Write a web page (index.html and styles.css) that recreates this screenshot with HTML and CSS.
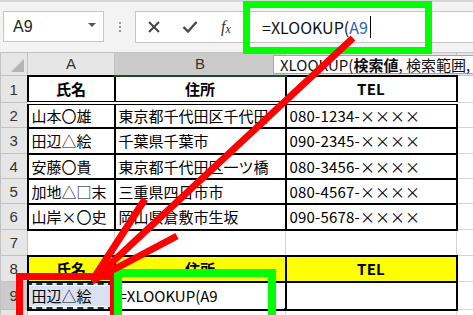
FILE: index.html
```html
<!DOCTYPE html>
<html lang="ja">
<head>
<meta charset="utf-8">
<link rel="stylesheet" href="styles.css">
</head>
<body>
<div class="fbar">
  <div class="namebox"><span>A9</span><span class="dd"></span></div>
  <div class="grip"><i></i><i></i><i></i></div>
  <div class="fbox">
    <span class="ic"><svg width="14" height="14" viewBox="0 0 14 14"><path d="M2 2L12 12M12 2L2 12" stroke="#444" stroke-width="2" fill="none"/></svg></span>
    <span class="ic"><svg width="16" height="14" viewBox="0 0 16 14"><path d="M1.5 7L6 11.5L14.5 2" stroke="#4a4a4a" stroke-width="2.4" fill="none"/></svg></span>
    <span class="ic fx"><i>f</i><i class="x">x</i></span>
    <span class="ftext">=XLOOKUP(<span class="ref">A9</span></span><span class="caret"></span>
  </div>
</div>
<table class="sheet">
  <colgroup><col class="c0"><col class="ca"><col class="cb"><col class="cc"><col class="cd"></colgroup>
  <tr class="hdr"><th class="corner"><span class="tri"></span></th><th class="ch">A</th><th class="ch selc">B</th><th class="ch">C</th><th class="ch">D</th></tr>
  <tr class="r1"><th class="rh">1</th><td class="t hd">氏名</td><td class="t hd">住所</td><td class="t hd cl">TEL</td><td></td></tr>
  <tr class="r2"><th class="rh">2</th><td class="t">山本〇雄</td><td class="t">東京都千代田区千代田</td><td class="t cl">080-1234-<span class="xx">××××</span></td><td></td></tr>
  <tr class="r3"><th class="rh">3</th><td class="t">田辺△絵</td><td class="t">千葉県千葉市</td><td class="t cl">090-2345-<span class="xx">××××</span></td><td></td></tr>
  <tr class="r4"><th class="rh">4</th><td class="t">安藤〇貴</td><td class="t">東京都千代田区一ツ橋</td><td class="t cl">080-3456-<span class="xx">××××</span></td><td></td></tr>
  <tr class="r5"><th class="rh">5</th><td class="t">加地△□末</td><td class="t">三重県四日市市</td><td class="t cl">080-4567-<span class="xx">××××</span></td><td></td></tr>
  <tr class="r6"><th class="rh">6</th><td class="t">山岸×〇史</td><td class="t">岡山県倉敷市生坂</td><td class="t cl">090-5678-<span class="xx">××××</span></td><td></td></tr>
  <tr class="r7"><th class="rh">7</th><td></td><td></td><td></td><td></td></tr>
  <tr class="r8"><th class="rh">8</th><td class="t hd y">氏名</td><td class="t hd y">住所</td><td class="t hd y cl">TEL</td><td></td></tr>
  <tr class="r9"><th class="rh selr">9</th><td class="t sel"><div class="ants">田辺△絵</div></td><td class="t active">=XLOOKUP(A9</td><td class="t cl"></td><td></td></tr>
  <tr class="r10"><th class="rh">10</th><td></td><td></td><td></td><td></td></tr>
</table>
<div class="tip">XLOOKUP(<b>検索値</b>, 検索範囲, 戻り配列, [見つからない場合])</div>
<svg class="overlay" width="473" height="315" viewBox="0 0 473 315">
  <rect x="19.5" y="276.5" width="94" height="60" fill="none" stroke="#ff0000" stroke-width="7"/>
  <rect x="118" y="273" width="154" height="60" fill="none" stroke="#00ff00" stroke-width="8"/>
  <rect x="246.5" y="4.5" width="182" height="46" fill="none" stroke="#00ff00" stroke-width="7"/>
  <g stroke="#ff0000" stroke-width="7" fill="none">
    <path d="M353 38L92 281"/>
    <path d="M145 199L92 281"/>
    <path d="M177 236L92 281"/>
  </g>
</svg>
</body>
</html>
```
FILE: styles.css
```css
html, body {
  margin: 0;
  padding: 0;
}
body {
  width: 473px;
  height: 315px;
  overflow: hidden;
  position: relative;
  background: #ffffff;
  font-family: "Noto Sans CJK JP", "Noto Sans", sans-serif;
  color: #000;
}
.fbar {
  height: 52px;
  box-sizing: border-box;
  background: #f3f3f3;
  border-top: 2px solid #d6d6d6;
  padding-top: 9px;
  display: flex;
  align-items: flex-start;
}
.namebox {
  margin-left: 3px;
  width: 101px;
  height: 31px;
  box-sizing: border-box;
  background: #fff;
  border: 1px solid #c6c6c6;
  display: flex;
  align-items: center;
  justify-content: space-between;
  padding: 0 7px 0 9px;
  font-family: "Liberation Sans", Arial, sans-serif;
  font-size: 16px;
  color: #222;
}
.dd {
  width: 0;
  height: 0;
  border-left: 4px solid transparent;
  border-right: 4px solid transparent;
  border-top: 4px solid #555;
  margin-bottom: 4px;
}
.grip {
  width: 31px;
  height: 31px;
  display: flex;
  flex-direction: column;
  align-items: center;
  justify-content: center;
  gap: 2px;
}
.grip i {
  width: 2px;
  height: 2px;
  background: #9a9a9a;
}
.fbox {
  flex: 1;
  height: 32px;
  box-sizing: border-box;
  background: #fff;
  border: 1px solid #c6c6c6;
  border-right: none;
  display: flex;
  align-items: center;
  white-space: nowrap;
}
.ic {
  width: 36px;
  display: flex;
  justify-content: center;
  align-items: center;
  flex: none;
}
.fx {
  font-family: "Liberation Serif", serif;
  font-style: italic;
  font-size: 16px;
  color: #333;
}
.fx i { font-style: italic; }
.fx .x { font-size: 12px; margin-top: 4px; }
.ftext {
  margin-left: 18px;
  font-size: 16px;
  color: #111;
  line-height: 1;
}
.ref { color: #2e5fb0; }
.caret {
  width: 1px;
  height: 22px;
  background: #000;
  margin-left: 2px;
}

.sheet {
  table-layout: fixed;
  border-collapse: collapse;
  width: 500px;
  font-size: 15px;
}
.c0 { width: 27px; }
.ca { width: 87px; }
.cb { width: 171px; }
.cc { width: 171px; }
.cd { width: 44px; }
.sheet td {
  border: 1px solid #d4d4d4;
  padding: 0 3px;
  white-space: nowrap;
  overflow: hidden;
  line-height: 1;
  vertical-align: middle;
}
.sheet th {
  font-weight: normal;
  font-family: "Liberation Sans", Arial, sans-serif;
  font-size: 15px;
  color: #333;
  background: #e6e6e6;
  border: 1px solid #c2c2c2;
  padding: 0;
  text-align: center;
  vertical-align: middle;
}
.hdr { height: 23px; }
.corner { position: relative; }
.tri {
  position: absolute;
  right: 3px;
  bottom: 3px;
  width: 0;
  height: 0;
  border-left: 13px solid transparent;
  border-bottom: 13px solid #b3b3b3;
}
.selc {
  background: #cbcbcb !important;
  border-bottom: 2px solid #1d4a2c !important;
}
.selr { background: #cbcbcb !important; }
.r1 { height: 27px; }
.r2 { height: 25px; }
.r3 { height: 26px; }
.r4 { height: 25px; }
.r5 { height: 25px; }
.r6 { height: 26px; }
.r7 { height: 26px; }
.r8 { height: 26px; }
.r9 { height: 26px; }
.r10 { height: 26px; }
.sheet td.t { border: 2px solid #000; }
.sheet .r1 td.t { border-bottom: 4px double #000; }
.hd {
  font-weight: bold;
  text-align: center;
}
.y { background: #ffff00; }
.cl { letter-spacing: 0.2px; }
.xx { letter-spacing: 0; }
.sel { padding: 0 !important; }
.ants {
  height: 22px;
  margin: 0 0 0 -3px;
  padding-left: 4px;
  display: flex;
  align-items: center;
  background: #dae1f3;
  border: 2px dashed #1e3b2a;
  outline: 1px solid #fff;
  outline-offset: -3px;
}
.active {
  position: relative;
}
.active::after {
  content: "";
  position: absolute;
  left: -2px;
  top: -2px;
  right: -2px;
  bottom: -2px;
  border: 2px solid #1b4a2e;
}
.active::before {
  content: "";
  position: absolute;
  right: -4px;
  bottom: -4px;
  width: 5px;
  height: 5px;
  background: #1b4a2e;
  z-index: 1;
}
.tip {
  position: absolute;
  left: 273px;
  top: 55px;
  height: 19px;
  box-sizing: border-box;
  padding: 0 6px;
  background: #fff;
  border: 1px solid #a6a6a6;
  font-size: 15px;
  line-height: 17px;
  white-space: nowrap;
  color: #111;
}
.overlay {
  position: absolute;
  left: 0;
  top: 0;
  pointer-events: none;
}
```
